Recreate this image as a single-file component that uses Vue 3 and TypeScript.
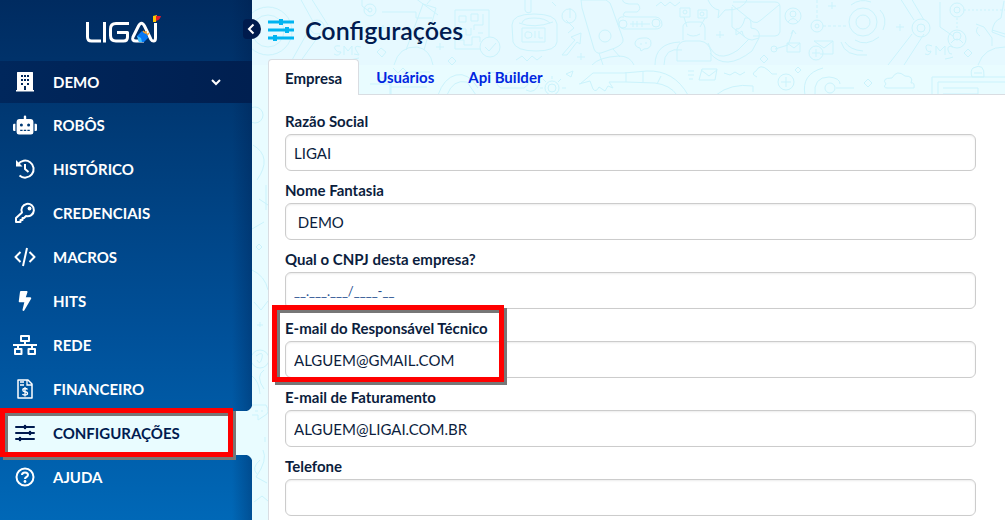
<script setup lang="ts">
import { ref } from 'vue'

interface MenuItem {
  id: string
  label: string
}

interface Field {
  id: string
  label: string
  value: string
  masked?: boolean
  marked?: boolean
}

const menu: MenuItem[] = [
  { id: 'robos', label: 'ROBÔS' },
  { id: 'historico', label: 'HISTÓRICO' },
  { id: 'credenciais', label: 'CREDENCIAIS' },
  { id: 'macros', label: 'MACROS' },
  { id: 'hits', label: 'HITS' },
  { id: 'rede', label: 'REDE' },
  { id: 'financeiro', label: 'FINANCEIRO' },
  { id: 'config', label: 'CONFIGURAÇÕES' },
  { id: 'ajuda', label: 'AJUDA' },
]
const current = ref('config')

const tabs = ['Empresa', 'Usuários', 'Api Builder']
const activeTab = ref('Empresa')

const fields = ref<Field[]>([
  { id: 'razao', label: 'Razão Social', value: 'LIGAI' },
  { id: 'fantasia', label: 'Nome Fantasia', value: ' DEMO' },
  { id: 'cnpj', label: 'Qual o CNPJ desta empresa?', value: '__.___.___/____-__', masked: true },
  { id: 'tecnico', label: 'E-mail do Responsável Técnico', value: 'ALGUEM@GMAIL.COM', marked: true },
  { id: 'faturamento', label: 'E-mail de Faturamento', value: 'ALGUEM@LIGAI.COM.BR' },
  { id: 'telefone', label: 'Telefone', value: '' },
])
</script>

<template>
  <div class="layout">
    <aside class="sidebar">
      <div class="brand">
        <svg class="logo" viewBox="0 0 76 30" width="76" height="30" role="img" aria-label="LIGAI">
          <g fill="none" stroke="#fff" stroke-width="3" stroke-linejoin="round" stroke-linecap="butt">
            <path d="M2.500 7V22Q2.500 26 6.500 26H16" />
            <path d="M19.500 7V27.500" />
            <path d="M44 8.500H31Q25.500 8.500 25.500 14V20.500Q25.500 26 31 26H38.500Q42.500 26 42.500 22V17.500H32" />
            <path d="M59 26H51Q46.500 26 48 22L53.500 11Q56.500 5.500 59.500 11L66 24.500Q67 26 68.500 26Q70.500 26 70.500 23V8" />
          </g>
          <path d="M52 21L57 16L62 18L63 23L59 27L54 27Z" fill="#0878f5" />
          <path d="M52 21L54 27H57L56 23Z" fill="#45c5ff" />
          <path d="M58 16L60 18M61 16L61 19M62 20L64 18" stroke="#f6a12c" stroke-width="1.500" />
          <path d="M68 1L72 0L71 7H68Z" fill="#ffc400" />
          <path d="M71 1H76Q75 5 71 6Z" fill="#e21d2b" />
        </svg>
      </div>
      <button class="company" type="button">
        <svg class="icon" viewBox="0 0 24 24" aria-hidden="true">
          <path fill="currentColor" fill-rule="evenodd" d="M4 2.500Q4 2 4.500 2H19.500Q20 2 20 2.500V20H21V21.500H3V20H4ZM8 5V7H10V5ZM11 5V7H13V5ZM14 5V7H16V5ZM8 9V11H10V9ZM11 9V11H13V9ZM14 9V11H16V9ZM8 13V15H10V13ZM14 13V15H16V13ZM11 16V20H13V16Z" />
        </svg>
        <span>DEMO</span>
        <svg class="chevron" viewBox="0 0 12 12" aria-hidden="true"><path d="M2 4L6 8L10 4" fill="none" stroke="currentColor" stroke-width="2" /></svg>
      </button>
      <nav aria-label="Menu">
        <ul class="menu">
          <li v-for="item in menu" :key="item.id" :class="{ active: current === item.id }">
            <a href="#" @click.prevent="current = item.id">
              <svg v-if="item.id === 'robos'" class="icon" viewBox="0 0 640 512" aria-hidden="true">
                <path fill="currentColor" d="M32,224H64V416H32A32,32,0,0,1,0,384V256A32,32,0,0,1,32,224Zm512-48V448a64,64,0,0,1-64,64H160a64,64,0,0,1-64-64V176a80,80,0,0,1,80-80H288V32a32,32,0,0,1,64,0V96H464A80,80,0,0,1,544,176ZM264,256a40,40,0,1,0-40,40A40,40,0,0,0,264,256Zm-8,128H192v32h64Zm96,0H288v32h64ZM456,256a40,40,0,1,0-40,40A40,40,0,0,0,456,256Zm-8,128H384v32h64ZM640,256V384a32,32,0,0,1-32,32H576V224h32A32,32,0,0,1,640,256Z" />
              </svg>
              <svg v-else-if="item.id === 'historico'" class="icon line" viewBox="0 0 24 24" aria-hidden="true">
                <path d="M5 7.500A8.500 8.500 0 1 1 6.500 18.500" /><path d="M12 7V12L15.500 15" />
                <path d="M3 3V9.500H9.500Z" fill="currentColor" stroke="none" />
              </svg>
              <svg v-else-if="item.id === 'credenciais'" class="icon line" viewBox="0 0 24 24" aria-hidden="true">
                <path d="M9 11.500A6.200 6.200 0 1 1 13 15L11 17H9.500V19H7.500V21H3V17Z" /><circle cx="16.500" cy="7.500" r="1.900" fill="currentColor" stroke="none" />
              </svg>
              <svg v-else-if="item.id === 'macros'" class="icon line" viewBox="0 0 24 24" aria-hidden="true">
                <path d="M7.500 7L2.500 12L7.500 17M16.500 7L21.500 12L16.500 17M14 3L10 21" />
              </svg>
              <svg v-else-if="item.id === 'hits'" class="icon bolt" viewBox="0 0 320 512" aria-hidden="true">
                <path fill="currentColor" d="M296 160H180.600l42.600-129.800C227.200 15 215.700 0 200 0H56C44 0 33.800 8.900 32.200 20.800l-32 240C-1.700 275.200 9.500 288 24 288h118.700L96.600 482.500c-3.600 15.200 8 29.500 23.300 29.500 8.400 0 16.400-4.400 20.800-12l176-304c9.300-15.900-2.200-36-20.700-36z" />
              </svg>
              <svg v-else-if="item.id === 'rede'" class="icon line" viewBox="0 0 24 24" aria-hidden="true">
                <path d="M8 3H16V8H8ZM2 16H8.500V21H2ZM15.500 16H22V21H15.500ZM12 8V12M0 12H24M5 12V16M19 12V16" />
              </svg>
              <svg v-else-if="item.id === 'financeiro'" class="icon" viewBox="0 0 24 24" aria-hidden="true">
                <path d="M5 3H15L19 7V21H5Z" fill="none" stroke="currentColor" stroke-width="1.500" stroke-linejoin="round" />
                <path d="M7 5H11M7 8H11M14 3V8H19" fill="none" stroke="currentColor" stroke-width="1.300" />
                <path d="M14.500 12.500Q14 11.500 12 11.500Q9.800 11.500 9.800 13T12 14.700Q14.500 15 14.500 16.500T12 18Q9.800 18 9.500 17M12 10V19.500" fill="none" stroke="currentColor" stroke-width="1.300" />
              </svg>
              <svg v-else-if="item.id === 'config'" class="icon" viewBox="0 0 24 24" aria-hidden="true">
                <path d="M3 6H21M3 12H21M3 18H21" fill="none" stroke="currentColor" stroke-width="2" stroke-linecap="round" />
                <path d="M12 5V7M17 11V13M7 17V19" fill="none" stroke="currentColor" stroke-width="2.500" stroke-linecap="round" />
              </svg>
              <svg v-else class="icon line" viewBox="0 0 24 24" aria-hidden="true">
                <circle cx="12" cy="12" r="8.500" /><path d="M9 10Q9 7.500 12 7.500T15 10Q15 11.200 13.500 12Q12 12.800 12 14" /><circle cx="12" cy="16.500" r="1.400" fill="currentColor" stroke="none" />
              </svg>
              <span>{{ item.label }}</span>
            </a>
            <span v-if="item.id === 'config'" class="mark mark-menu" aria-hidden="true"></span>
          </li>
        </ul>
      </nav>
      <button class="collapse" type="button" aria-label="Recolher menu">
        <svg viewBox="0 0 18 20" width="18" height="20" aria-hidden="true"><path d="M10.500 5.500L6 10L10.500 14.500" fill="none" stroke="#fff" stroke-width="2" /></svg>
      </button>
    </aside>

    <main class="content">
      <svg class="doodles" viewBox="252 0 753 520" width="753" height="520" aria-hidden="true">
        <defs>
          <clipPath id="upper"><rect x="252" y="0" width="753" height="65" /></clipPath>
          <clipPath id="lower"><rect x="252" y="65" width="753" height="30" /></clipPath>
        </defs>
        <rect x="252" y="0" width="753" height="65" fill="#e6f9ff" stroke="none" />
        <g clip-path="url(#upper)">
          <circle cx="268" cy="31" r="24" /><circle cx="268" cy="31" r="16" />
          <path d="M300 -2L316 27M311 -2L328 25M292 60L310 28M300 62L320 34" />
          <circle cx="317" cy="27" r="7" />
          <path d="M362 -2V6L370 12M382 12H416V18H432" /><circle cx="370" cy="10" r="6" /><circle cx="370" cy="10" r="2" />
          <path d="M340 46Q333 45 335 49T341 52Q339 57 334 54M344 55V46L348 51L352 46V55M361 47Q353 45 356 50T359 55L354 54M350 60L359 58" />
          <path d="M381 48L386 52L382 57L377 52ZM452 57L456 61L452 65L448 61ZM440 43V50M436 47H444M383 25V31M380 28H386" />
          <path d="M415 -2L438 15M432 -2L427 4M406 50L423 4L436 8L424 50M394 65Q399 46 417 47Q430 49 433 65" />
          <path d="M455 10H489V49H455ZM459 16H466V22H459ZM471 14H478V21H471ZM483 14V25H474V30M458 29H466V35H471V28M458 40H464V45H472V37H480V42M483 33H478" />
          <circle cx="490" cy="47" r="10" fill="#e6f9ff" /><path d="M485 47L489 51L496 43" />
          <path d="M525 -2V10Q526 14 531 12V-2M512 25Q512 14 534 14T557 24V42Q556 51 536 51T513 42Z M519 23Q534 29 553 22M522 23Q523 18 534 18T550 23M522 28H545V42H522Z" />
          <path d="M529 32Q525 31 525 35T529 38Q532 38 532 35T529 32M535 31V38M539 31V38H543M516 60L522 56L527 61L532 56L537 60L542 56" />
          <path d="M552 2L556 6M570 8V18M566 20L574 28L568 33M562 55L575 40L571 37L581 33L580 44L577 42L567 55ZM581 53V60M577 57H585" />
          <circle cx="569" cy="16" r="7" />
          <path d="M581 0H606Q611 2 612 8L623 39Q624 44 615 48L601 53Q596 54 594 49L582 8ZM599 53L603 65M613 49L620 57M592 65Q599 57 619 56Q630 56 634 65" /><circle cx="605" cy="36" r="6" />
          <path d="M623 -2Q621 3 629 4H638Q642 9 637 12H625Q620 17 630 17H656Q662 18 662 25Q661 29 655 29H624Q618 28 618 22T624 17" /><circle cx="623" cy="24" r="4" /><circle cx="656" cy="23" r="4" /><path d="M630 24H650M633 21V27M637 21V27M642 21V27" />
          <path d="M656 6L661 2L665 6L670 2L675 6L680 2M635 43Q636 38 643 38Q651 37 651 43T644 49L641 51L640 48Q635 47 635 43M640 44H642M645 43H647" />
          <path d="M680 8H690V17H680ZM698 10H707V18H698ZM684 17L687 27M705 18L700 27M683 40V26Q684 22 690 22H700Q704 22 705 28V40M687 34Q693 38 700 34M677 61V49Q679 41 686 41H700Q709 42 711 52V61ZM680 42Q655 43 655 65M682 50Q664 47 664 65M708 43Q716 65 738 50L749 39M710 53Q725 72 752 51L759 38" />
          <circle cx="685" cy="12" r="2" /><circle cx="702" cy="14" r="2" />
          <path d="M708 0Q712 9 719 10L718 18L725 10Q743 11 748 -2M733 2H775Q780 2 780 7V32Q779 36 775 36H753M732 5L753 22Q757 24 761 20L779 5M732 7V27L745 37M745 18Q751 17 751 24V28Q761 29 759 38L752 40Q743 39 742 31L736 35V29Q742 30 745 18" />
          <circle cx="793" cy="16" r="8" /><circle cx="793" cy="14" r="3" /><path d="M788 22Q793 15 798 22" />
          <path d="M775 49L788 45L793 31M791 34L793 30L796 34M787 43H800V52H787ZM787 43L794 48L800 43M764 55L768 59L764 63L760 59Z" /><circle cx="774" cy="49" r="3" />
          <path d="M814 41H833V54H820M814 41L824 48L833 41" /><circle cx="816" cy="53" r="7" /><path d="M812 53H820M816 49V57" />
          <circle cx="863" cy="22" r="14" /><circle cx="863" cy="22" r="7" /><path d="M851 5Q860 -2 871 2M880 10Q888 18 883 30M855 40Q866 47 879 37M841 42Q845 57 867 55M845 42Q850 50 863 51" /><path d="M817 0V21M823 26H846" stroke-dasharray="3 2" /><circle cx="817" cy="26" r="6" /><circle cx="817" cy="26" r="2" />
          <path d="M900 -2L914 20M911 -2L924 20M888 65L912 34M904 65L924 34M940 2V27L953 36" /><circle cx="921" cy="28" r="9" /><circle cx="921" cy="28" r="4" />
          <path d="M932 46Q925 43 926 48T931 51Q930 56 925 54M936 55V46L940 51L945 46V55M953 47Q947 45 948 50T952 54M945 59Q951 58 953 57M968 49L972 53L968 57L964 53ZM832 2V9M828 6H836M900 24V31M896 27H904M720 31V38M716 35H724" />
          <circle cx="957" cy="10" r="7" /><circle cx="957" cy="10" r="3" /><path d="M964 10H1005M957 18V28" stroke-dasharray="2 2" /><circle cx="957" cy="39" r="9" /><circle cx="957" cy="36" r="4" /><path d="M951 43Q957 35 963 43" />
          <path d="M1004 1L1001 18Q993 21 992 32L1005 37M992 30L1005 34M992 38V46M978 65Q984 47 1005 47M976 24L984 27L992 38M978 27Q974 32 980 36" />
        </g>
        <g clip-path="url(#lower)">
          <path d="M270 83H290M278 78H298V90H278ZM378 78H394M370 84H390V94M402 72H430M391 80V94M391 87H427M393 68L398 73L403 68L408 73" />
          <path d="M438 95Q444 78 456 75T478 88M447 95Q453 79 467 82L476 95M484 76L488 72L500 73M501 81Q509 65 521 77Q535 81 524 88H501Q493 83 501 81M526 90Q535 95 540 82" />
          <circle cx="552" cy="88" r="7" /><circle cx="552" cy="88" r="4" /><path d="M543 88H540M552 79V76M562 88H566M546 82L543 79M558 82L561 79" />
          <path d="M566 74L573 71L571 77ZM580 84L593 73H624L647 71Q674 70 688 95M579 84L590 81L593 89Q596 93 599 87L605 91L608 86L613 88L609 82H626L655 83Q670 85 677 95M626 72V82M643 71V82M661 76L657 84" />
          <path d="M688 71H694M688 75H694M689 79H693M702 69H717L715 80H699ZM701 70L709 76L717 70M724 73L730 75L735 72L740 75L745 72M757 77Q750 74 756 71Q760 63 768 70L772 74H777M716 95Q731 83 753 86V92" />
          <circle cx="786" cy="82" r="8" /><path d="M781 82H791M786 77V87M805 95Q801 74 823 68M815 95Q813 77 829 77Q840 78 840 84M836 88H854M868 79L872 83L868 87L864 83ZM798 67L801 70L798 73L795 70Z" /><circle cx="830" cy="88" r="5" />
          <path d="M886 84Q881 78 892 78Q897 69 905 76Q914 76 911 83Q915 82 914 88H888Q882 88 886 84M932 95V77H1005M938 95V82H1005M943 88H978V94H943M973 68Q985 62 984 77H972Q970 71 973 68M974 73H982" />
        </g>
        <g>
          <circle cx="255" cy="115" r="8" /><path d="M253 145Q273 157 257 180M266 185V210M259 199L268 205M252 229L264 222M259 244L262 247L259 250L256 247ZM252 270Q265 276 268 290M254 302L261 310L268 301M260 322V327M257 325H263" />
          <circle cx="260" cy="359" r="9" /><path d="M256 356Q264 350 262 358T257 360M252 376Q259 381 260 394M264 370Q255 376 264 389M252 405H266Q271 413 264 416L258 420V415H252M255 411H258M261 411H263M265 437V442M260 460Q251 468 257 474M263 450Q268 460 256 477L267 483M254 502L262 496L268 501" />
        </g>
      </svg>

      <header class="heading">
        <svg viewBox="0 0 26 24" width="26" height="24" aria-hidden="true">
          <path d="M0 4H26M0 12H26M0 20H26" stroke="#00b4f1" stroke-width="3" />
          <path d="M13 1V7M19 9V15M7 17V23" stroke="#00b4f1" stroke-width="4" />
        </svg>
        <h1>Configurações</h1>
      </header>
      <div class="tabs" role="tablist">
        <button v-for="tab in tabs" :key="tab" type="button" role="tab" class="tab" :class="{ selected: activeTab === tab }" :aria-selected="activeTab === tab" @click="activeTab = tab">{{ tab }}</button>
      </div>
      <form class="panel" @submit.prevent>
        <div v-for="field in fields" :key="field.id" class="field">
          <label :for="field.id">{{ field.label }}</label>
          <input :id="field.id" v-model="field.value" type="text" :class="{ masked: field.masked }" />
          <span v-if="field.marked" class="mark mark-field" aria-hidden="true"></span>
        </div>
      </form>
    </main>
  </div>
</template>

<style>
body {
  overflow: hidden;
}
</style>

<style scoped>
.layout {
  display: flex;
  height: 100vh;
  overflow: hidden;
  font-family: Lato, 'Liberation Sans', sans-serif;
  font-size: 15px;
  color: #0b1d3d;
  background: #e9fcff;
}
* {
  box-sizing: border-box;
}
button,
input {
  font: inherit;
}
.sidebar {
  position: relative;
  z-index: 2;
  flex: 0 0 252px;
  color: #fff;
  background:
    linear-gradient(to left, rgba(0, 25, 70, 0.3), rgba(0, 25, 70, 0) 20px),
    linear-gradient(#002b60, #003b77 26%, #00519a 65%, #0068b7);
}
.brand {
  display: flex;
  justify-content: center;
  height: 61px;
  padding: 15px 6px 0 0;
}
.company {
  display: flex;
  align-items: center;
  gap: 16px;
  width: 100%;
  height: 42px;
  padding: 0 30px 0 13px;
  border: 0;
  color: inherit;
  font-weight: 700;
  background: linear-gradient(to right, #00275c, #001f50);
}
.icon {
  flex: none;
  width: 24px;
  height: 24px;
}
.icon.line {
  fill: none;
  stroke: currentColor;
  stroke-width: 2;
  stroke-linejoin: round;
}
.icon.bolt {
  padding: 2px;
}
.chevron {
  width: 12px;
  height: 12px;
  margin-left: auto;
}
.menu {
  margin: 0;
  padding: 0;
  list-style: none;
}
.menu li {
  position: relative;
}
.menu a {
  display: flex;
  align-items: center;
  gap: 16px;
  height: 44px;
  padding: 0 13px;
  color: inherit;
  font-weight: 700;
  text-decoration: none;
}
.menu .active {
  color: #001b50;
  background: #e9fcff;
}
.menu .active::before,
.menu .active::after {
  content: '';
  position: absolute;
  right: 0;
  width: 8px;
  height: 8px;
}
.menu .active::before {
  bottom: 100%;
  background: radial-gradient(circle at 0 0, transparent 8px, #e9fcff 9px);
}
.menu .active::after {
  top: 100%;
  background: radial-gradient(circle at 0 100%, transparent 8px, #e9fcff 9px);
}
.collapse {
  position: absolute;
  top: 19px;
  right: -9px;
  width: 18px;
  height: 20px;
  padding: 0;
  border: 0;
  border-radius: 4px 10px 10px 4px;
  line-height: 0;
  background: #001b4d;
}
.mark {
  position: absolute;
  z-index: 3;
  border: 5px solid #f00;
  filter: drop-shadow(3px 3px 0 #777);
  pointer-events: none;
}
.mark-menu {
  inset: -3px 19px -2px 0;
}
.mark-field {
  top: -12px;
  left: -13px;
  width: 232px;
  height: 77px;
}
.content {
  position: relative;
  flex: 1;
  min-width: 0;
  padding-left: 16px;
}
.doodles {
  position: absolute;
  top: 0;
  left: 0;
  fill: none;
  stroke: #cbf3fc;
  stroke-width: 1;
  stroke-linejoin: round;
}
.heading {
  position: relative;
  display: flex;
  align-items: center;
  gap: 11px;
  height: 59px;
}
h1 {
  margin: 0;
  color: #001b50;
  font-size: 25px;
  font-weight: 600;
  line-height: 32px;
}
.tabs {
  position: relative;
  z-index: 1;
  display: flex;
  height: 36px;
}
.tab {
  padding: 0 17px;
  border: 0;
  color: #0026e0;
  font-weight: 700;
  background: none;
}
.tab.selected {
  padding: 0 16px;
  border: 1px solid #d9dde2;
  border-bottom: 0;
  border-radius: 4px 4px 0 0;
  color: #0b1d3d;
  background: #fff;
}
.panel {
  position: relative;
  min-height: 100%;
  margin-top: -1px;
  padding: 15px 29px 0 16px;
  border: solid #d9dde2;
  border-width: 1px 0 0 1px;
  background: #fff;
}
.field {
  position: relative;
  margin-bottom: 8px;
}
label {
  display: block;
  height: 24px;
  font-weight: 700;
  line-height: 22px;
}
input {
  display: block;
  width: 100%;
  height: 37px;
  padding: 0 8px;
  border: 1px solid #ccc;
  border-radius: 6px;
  outline: 0;
  color: #0b1d3d;
  font-size: 15px;
  background: #fff;
  box-shadow: inset 0 1px 2px rgba(0, 0, 0, 0.08);
}
input.masked {
  color: #1f4f8f;
  font-size: 13px;
}
</style>
